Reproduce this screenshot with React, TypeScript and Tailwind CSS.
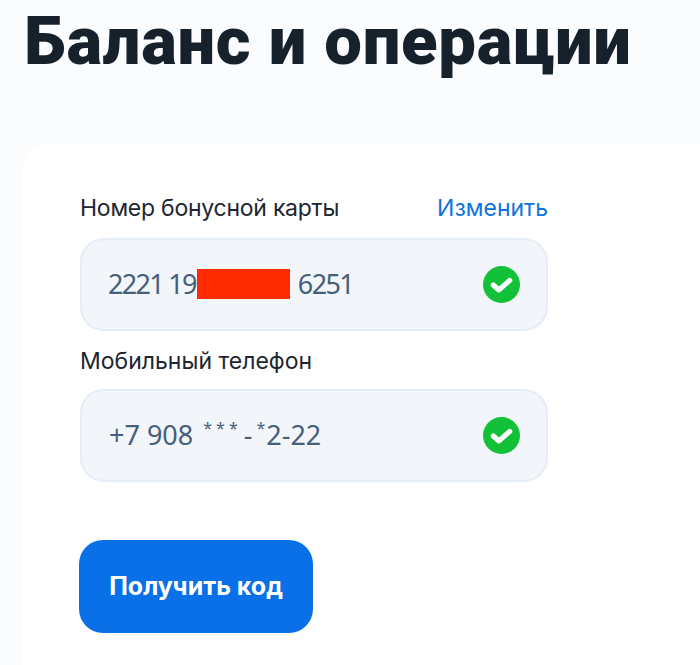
const sans = "font-['Inter','Noto_Sans',sans-serif]"

function CheckBadge() {
  return (
    <svg width="37" height="37" viewBox="0 0 36 36" className="shrink-0">
      <circle cx="18" cy="18" r="18" fill="#13c138" />
      <path d="M10 18.5l5.5 4.8 10.5-9.3" fill="none" stroke="#fff" strokeWidth="5" strokeLinecap="round" strokeLinejoin="round" />
    </svg>
  )
}

function Field({ children }: { children: React.ReactNode }) {
  return (
    <div className="h-[93px] w-[468px] rounded-[24px] border-2 border-[#e6edf6] bg-[#f2f5fa] flex items-center justify-between pl-[27px] pr-[26px]">
      <div className="font-['Noto_Sans',sans-serif] text-[27px] text-[#465f7a] leading-none flex items-center whitespace-nowrap -translate-y-[1px]">
        {children}
      </div>
      <CheckBadge />
    </div>
  )
}

export default function App() {
  return (
    <div className={`${sans} w-[700px] h-[665px] overflow-hidden bg-[#fafcfe] flex flex-col`}>
      <h1 className="h-[144px] pl-[24px] pt-[3px] font-['Roboto',sans-serif] text-[67px] leading-[76px] font-black tracking-[0.7px] text-[#17212b] whitespace-nowrap">
        Баланс и операции
      </h1>
      <div className="ml-[22px] flex-1 rounded-tl-[26px] bg-white pl-[58px] pt-[48px]">
        <div className="w-[468px] flex items-center justify-between h-[33px] mb-[13px] text-[23px]">
          <span className="text-[#1d2630] tracking-[-0.25px]">Номер бонусной карты</span>
          <span className="text-[#0f73e0]">Изменить</span>
        </div>
        <Field>
          <span className="-ml-[1px] tracking-[-1.7px]">2221 19</span>
          <span className="ml-[1px] mr-[8px] w-[93px] h-[30px] bg-[#ff2a00]" />
          <span className="tracking-[-1.6px]">6251</span>
        </Field>
        <div className="h-[33px] mt-[14px] mb-[11px] flex items-center text-[23px] text-[#1d2630]">Мобильный телефон</div>
        <Field>
          <span>+7 908&nbsp;</span>
          <span className="ml-[3px] text-[16px] tracking-[4px] -translate-y-[7px]">***</span>
          <span className="ml-[2px]">-</span>
          <span className="ml-[4px] mr-[1px] text-[16px] -translate-y-[7px]">*</span>
          <span>2-22</span>
        </Field>
        <button className="mt-[58px] -ml-[1px] w-[234px] h-[93px] rounded-[24px] bg-[#0a70e8] text-white text-[25px] font-bold flex items-center justify-center">
          Получить код
        </button>
      </div>
    </div>
  )
}
